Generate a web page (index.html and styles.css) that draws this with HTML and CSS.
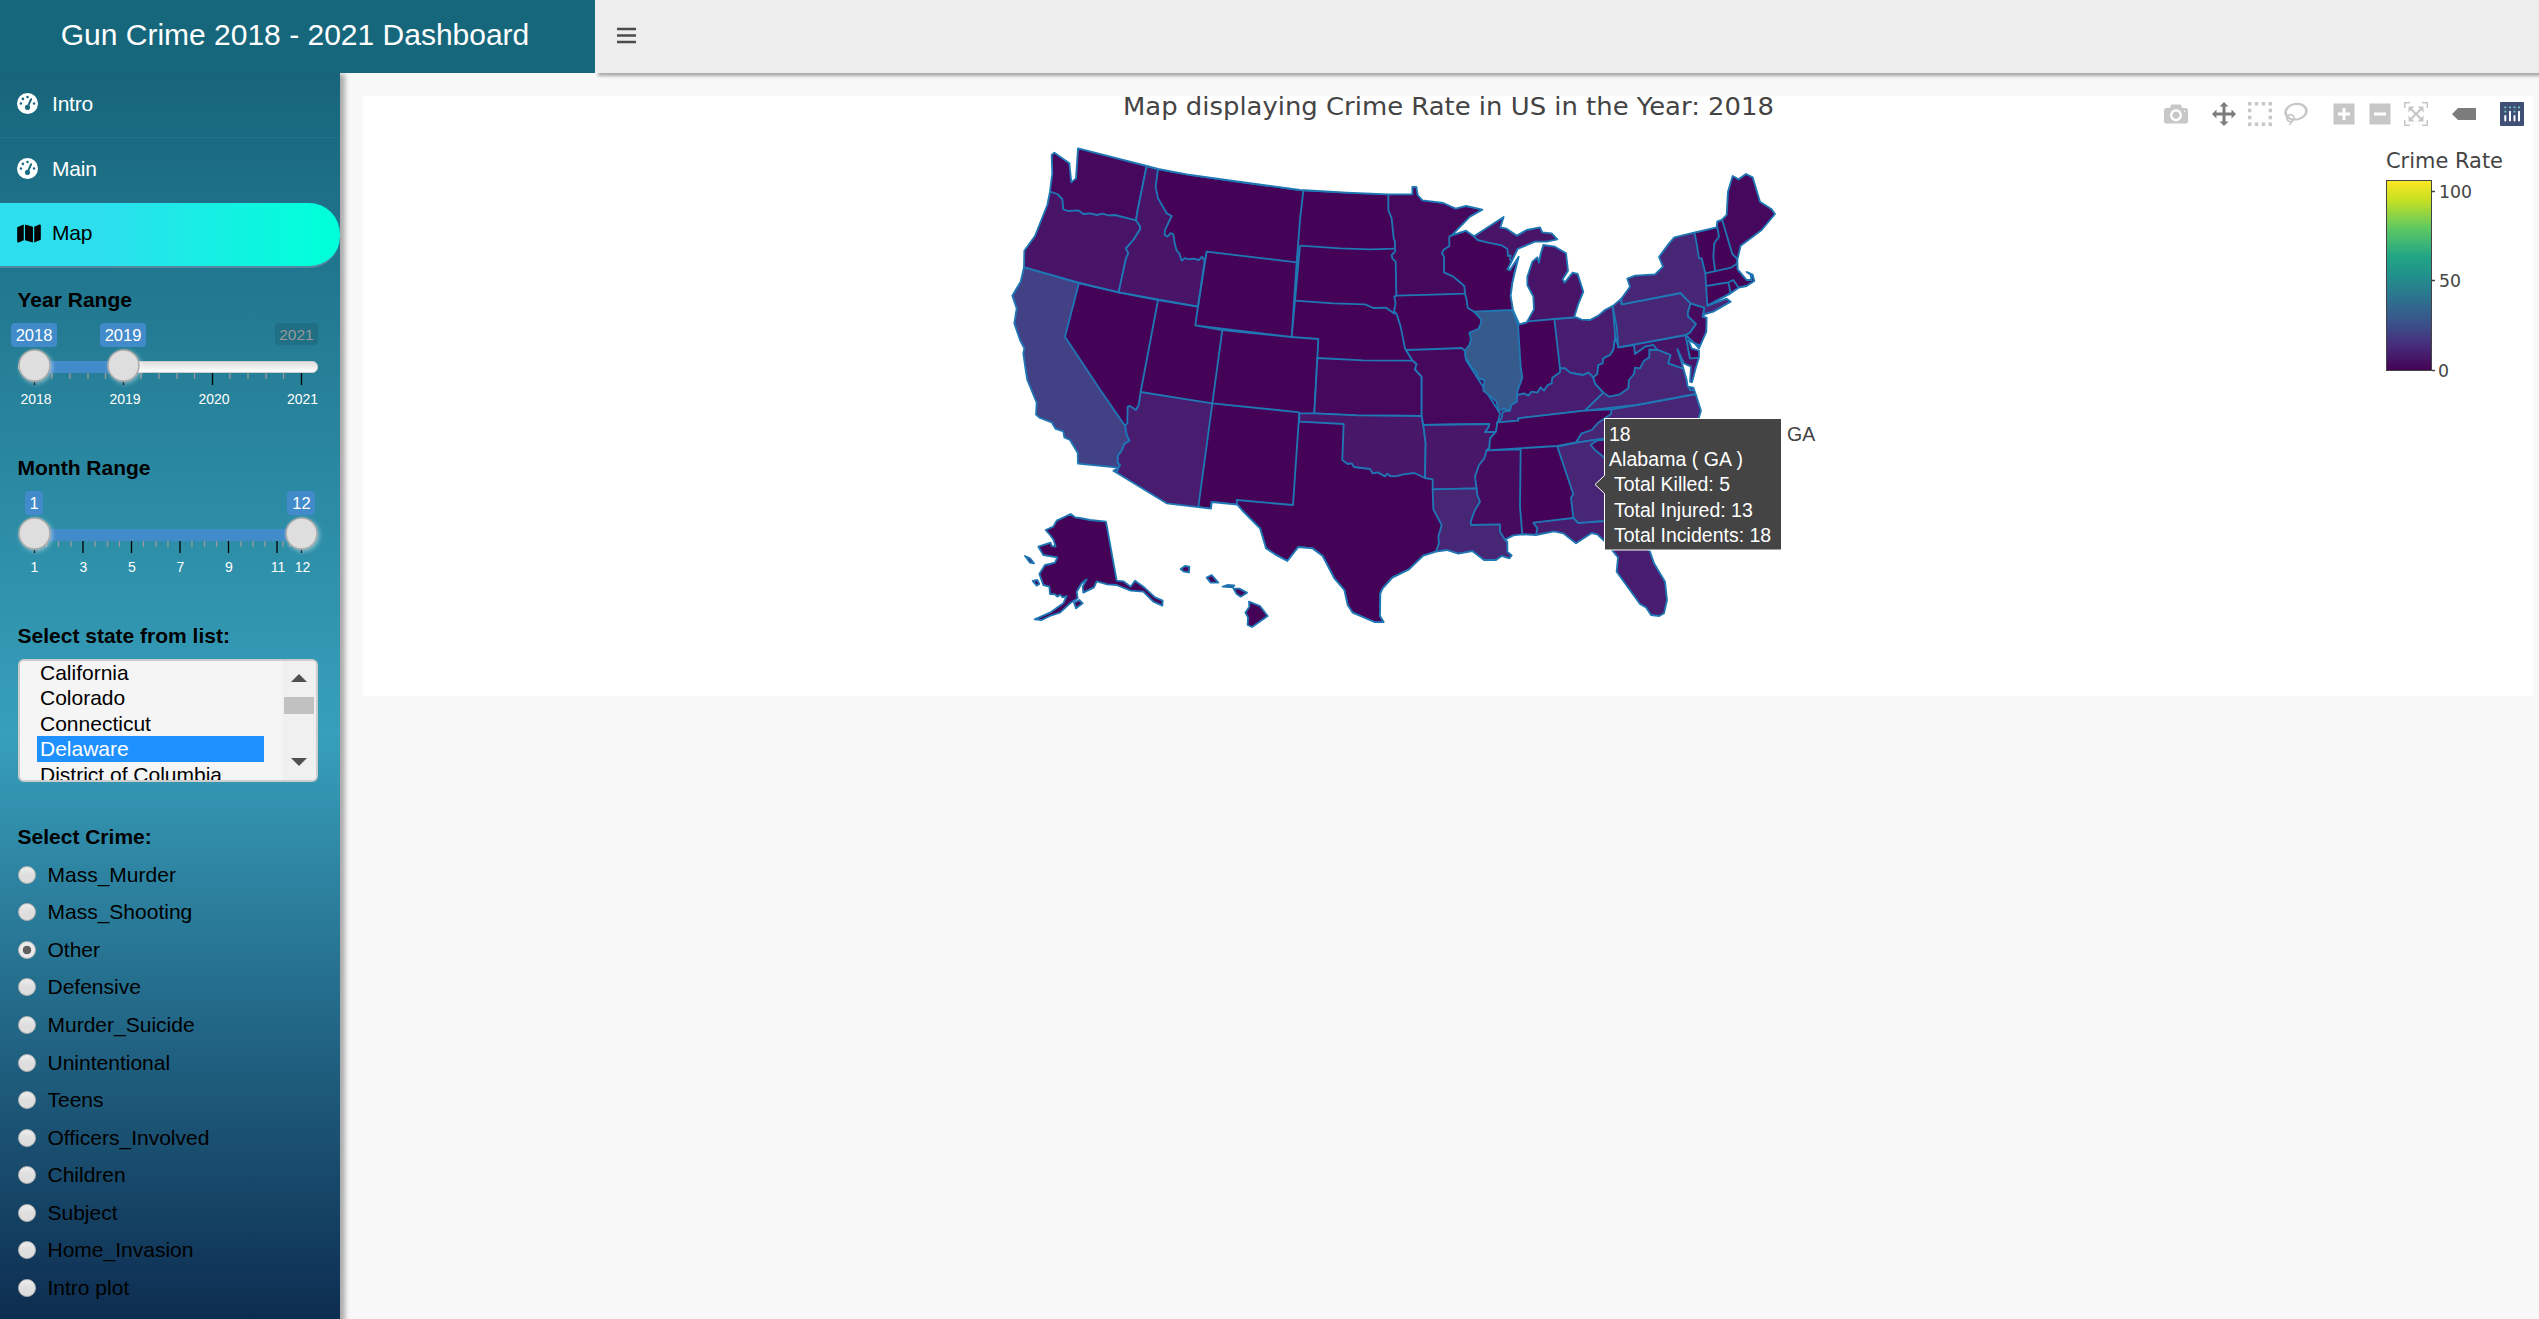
FILE: index.html
```html
<!DOCTYPE html>
<html lang="en">
<head>
<meta charset="utf-8">
<title>Gun Crime 2018 - 2021 Dashboard</title>
<link rel="stylesheet" href="styles.css">
</head>
<body>
<header class="header">
  <div class="logo">Gun Crime 2018 - 2021 Dashboard</div>
  <nav class="navbar">
    <svg class="burger" viewBox="0 0 20 17"><path d="M0 2H19M0 8.5H19M0 15H19"/></svg>
  </nav>
</header>
<div class="body">
<aside class="sidebar">
  <ul class="menu">
    <li class="item"><svg class="fa" viewBox="0 0 512 512"><path d="M0 256a256 256 0 1 1 512 0A256 256 0 1 1 0 256zM288 96a32 32 0 1 0 -64 0 32 32 0 1 0 64 0zM256 416c35.3 0 64-28.7 64-64c0-17.4-6.9-33.1-18.1-44.6L366 161.7c5.3-12.1-.2-26.3-12.3-31.6s-26.3 .2-31.6 12.3L257.9 288c-.6 0-1.3 0-1.9 0c-35.3 0-64 28.7-64 64s28.7 64 64 64zM176 144a32 32 0 1 0 -64 0 32 32 0 1 0 64 0zM96 288a32 32 0 1 0 0-64 32 32 0 1 0 0 64zm352-32a32 32 0 1 0 -64 0 32 32 0 1 0 64 0z"/></svg><span>Intro</span></li>
    <li class="item"><svg class="fa" viewBox="0 0 512 512"><path d="M0 256a256 256 0 1 1 512 0A256 256 0 1 1 0 256zM288 96a32 32 0 1 0 -64 0 32 32 0 1 0 64 0zM256 416c35.3 0 64-28.7 64-64c0-17.4-6.9-33.1-18.1-44.6L366 161.7c5.3-12.1-.2-26.3-12.3-31.6s-26.3 .2-31.6 12.3L257.9 288c-.6 0-1.3 0-1.9 0c-35.3 0-64 28.7-64 64s28.7 64 64 64zM176 144a32 32 0 1 0 -64 0 32 32 0 1 0 64 0zM96 288a32 32 0 1 0 0-64 32 32 0 1 0 0 64zm352-32a32 32 0 1 0 -64 0 32 32 0 1 0 64 0z"/></svg><span>Main</span></li>
    <li class="item active"><svg class="fa wide" viewBox="0 0 576 512"><path d="M384 476.1L192 421.2V35.9L384 90.8V476.1zm32-1.2V88.4L543.1 37.5c15.8-6.3 32.9 5.3 32.9 22.3V394.6c0 9.8-6 18.6-15.1 22.3L416 474.8v.1zM15.1 95.1L160 37.2V423.6L32.9 474.5C17.1 480.8 0 469.2 0 452.2V117.4c0-9.8 6-18.6 15.1-22.3z"/></svg><span>Map</span></li>
  </ul>

  <div class="field slider-field">
    <label class="label">Year Range</label>
    <svg class="slider" viewBox="0 0 340 90" width="340" height="90">
      <defs>
        <linearGradient id="track" x2="0" y2="1"><stop offset="0" stop-color="#ddd"/><stop offset=".5" stop-color="#eee"/><stop offset="1" stop-color="#fff"/></linearGradient>
        <filter id="glow" x="-40%" y="-40%" width="180%" height="180%"><feDropShadow dx="1.5" dy="1.5" stdDeviation="2" flood-color="#fff" flood-opacity=".45"/></filter>
      </defs>
      <path class="tick minor" d="M52 52v6M70 52v6M88 52v6M105.500 52v6M141 52v6M159 52v6M177 52v6M194.500 52v6M230 52v6M248 52v6M266 52v6M283.500 52v6"/>
      <path class="tick" d="M34.500 52v12M123.500 52v12M212.500 52v12M301.500 52v12"/>
      <rect x="18.500" y="40.500" width="299" height="11" rx="5" fill="url(#track)" stroke="#ccc"/>
      <rect x="34" y="40" width="89" height="12" class="bar"/>
      <rect x="11" y="2" width="46" height="24" rx="4" class="bar"/><text x="34" y="20" class="val">2018</text>
      <rect x="100" y="2" width="46" height="24" rx="4" class="bar"/><text x="123" y="20" class="val">2019</text>
      <rect x="275" y="2" width="43" height="22" rx="4" fill="#000" fill-opacity=".1"/><text x="296.500" y="19" class="val dim">2021</text>
      <circle cx="34.500" cy="44.500" r="15.500" class="knob"/><circle cx="123.500" cy="44.500" r="15.500" class="knob"/>
      <text x="36" y="83" class="num">2018</text><text x="125" y="83" class="num">2019</text><text x="214" y="83" class="num">2020</text><text x="302.500" y="83" class="num">2021</text>
    </svg>
  </div>

  <div class="field slider-field">
    <label class="label">Month Range</label>
    <svg class="slider" viewBox="0 0 340 90" width="340" height="90">
      <path class="tick minor" d="M46.500 52v6M58.500 52v6M71 52v6M95 52v6M107.500 52v6M119.500 52v6M143.500 52v6M156 52v6M168 52v6M192 52v6M204.500 52v6M216.500 52v6M241 52v6M253 52v6M265 52v6M283 52v6M290 52v6"/>
      <path class="tick" d="M34.500 52v12M83 52v12M131.500 52v12M180 52v12M228.500 52v12M277 52v12M301.500 52v12"/>
      <rect x="34" y="40" width="267" height="12" class="bar"/>
      <rect x="25" y="2" width="18" height="24" rx="4" class="bar"/><text x="34" y="20" class="val">1</text>
      <rect x="287" y="2" width="28" height="24" rx="4" class="bar"/><text x="301.500" y="20" class="val">12</text>
      <circle cx="34.500" cy="44.500" r="15.500" class="knob"/><circle cx="301.500" cy="44.500" r="15.500" class="knob"/>
      <text x="34.500" y="83" class="num">1</text><text x="83.500" y="83" class="num">3</text><text x="132" y="83" class="num">5</text><text x="180.500" y="83" class="num">7</text><text x="229" y="83" class="num">9</text><text x="278" y="83" class="num">11</text><text x="302.500" y="83" class="num">12</text>
    </svg>
  </div>

  <div class="field list-field">
    <label class="label">Select state from list:</label>
    <div class="listbox">
      <ul class="options"><li>California</li><li>Colorado</li><li>Connecticut</li><li class="sel">Delaware</li><li>District of Columbia</li></ul>
      <div class="scroll"><i class="up"></i><i class="thumb"></i><i class="down"></i></div>
    </div>
  </div>

  <div class="field">
    <label class="label">Select Crime:</label>
    <ul class="radios">
      <li><i></i>Mass_Murder</li><li><i></i>Mass_Shooting</li><li><i class="on"></i>Other</li><li><i></i>Defensive</li><li><i></i>Murder_Suicide</li><li><i></i>Unintentional</li><li><i></i>Teens</li><li><i></i>Officers_Involved</li><li><i></i>Children</li><li><i></i>Subject</li><li><i></i>Home_Invasion</li><li><i></i>Intro plot</li>
    </ul>
  </div>
</aside>

<main class="content">
<section class="card">
<svg class="plot" viewBox="363 96 2170 600" width="2170" height="600">
  <defs>
    <path id="land" d="M155 75L163 68 208 100 214 157 228 145 234 55 440 108 474 117 560 133 700 153 900 180 1040 188 1165 193 1237 193 1237 171 1249 171 1253 195 1267 211 1330 219 1367 236 1398 228 1447 239 1410 260 1355 316 1398 302 1422 319 1511 261 1501 292 1520 296 1551 317 1580 300 1620 292 1627 307 1655 310 1672 328 1640 335 1605 335 1560 354 1553 357 1537 390 1523 418 1530 420 1556 380 1544 428 1537 460 1532 497 1539 540 1558 583 1580 577 1602 538 1600 500 1582 465 1582 440 1597 395 1612 382 1617 398 1622 372 1630 345 1665 350 1698 370 1704 422 1688 448 1694 458 1718 428 1733 432 1750 485 1735 522 1723 560 1745 569 1770 570 1795 557 1815 540 1840 527 1864 506 1890 470 1882 446 1905 437 1965 433 1989 410 1977 381 2005 343 2023 322 2082 308 2150 292 2152 274 2165 270 2180 255 2184 185 2198 138 2216 148 2238 132 2258 142 2280 215 2315 238 2325 252 2285 300 2222 347 2212 390 2213 418 2240 450 2254 450 2252 434 2240 426 2258 434 2263 453 2240 468 2216 473 2192 490 2150 512 2122 528 2180 506 2192 515 2140 545 2115 552 2108 560 2120 563 2119 605 2097 655 2084 640 2065 630 2075 655 2097 662 2097 682 2087 715 2076 757 2070 755 2073 710 2052 700 2032 657 2042 688 2050 715 2060 750 2063 770 2080 773 2087 792 2103 842 2097 862 2050 950 1950 1080 1900 1180 1950 1265 1962 1300 1995 1355 2001 1410 1992 1450 1978 1458 1953 1455 1938 1432 1920 1422 1850 1325 1854 1282 1840 1265 1810 1230 1792 1213 1775 1209 1728 1240 1690 1210 1662 1204 1608 1215 1565 1213 1540 1216 1515 1229 1522 1235 1522 1265 1535 1276 1528 1285 1505 1278 1488 1290 1452 1290 1417 1263 1375 1271 1340 1260 1308 1265 1270 1277 1227 1318 1177 1343 1148 1375 1141 1390 1140 1458 1151 1476 1123 1476 1058 1448 1043 1425 1033 1380 1003 1345 968 1278 937 1255 895 1251 862 1293 825 1273 798 1255 780 1195 730 1145 712 1124 635 1116 633 1136 500 1120 340 1022 355 1013 234 1001 233 968 210 930 193 922 190 904 167 897 155 877 120 864 108 854 110 818 82 750 77 720 70 670 73 655 60 630 43 580 50 535 37 497 62 455 72 412 73 362 105 318 142 225 150 185 157 130Z"/>
    <clipPath id="coast"><use href="#land"/></clipPath>
    <linearGradient id="viridis" x2="0" y2="1"><stop offset="0" stop-color="#fde725"/><stop offset=".1" stop-color="#c8e020"/><stop offset=".25" stop-color="#5ec962"/><stop offset=".4" stop-color="#21a585"/><stop offset=".5" stop-color="#21918c"/><stop offset=".62" stop-color="#2c728e"/><stop offset=".75" stop-color="#3b528b"/><stop offset=".87" stop-color="#472c7a"/><stop offset="1" stop-color="#440154"/></linearGradient>
  </defs>

  <g class="map" transform="translate(1000 130) scale(.33333)">
    <g clip-path="url(#coast)">
      <use href="#land" class="c0"/>
      <!-- Pacific and mountain states -->
      <path class="c3" d="M73 412L237 459 356 487 378 385 385 370 378 355 400 330 421 297 420 288 408 271 400 200 130 160 0 400Z"/>
      <path class="c1" d="M150 185L172 192 187 207 190 238 205 243 235 241 250 252 272 250 290 255 308 251 325 256 345 255 408 271 412 245 440 108 440 30 130 30Z"/>
      <path class="c3" d="M440 108L474 117 467 170 474 205 500 250 515 258 500 290 495 300 494 315 503 320 512 309 520 313 524 340 530 362 538 370 545 392 555 384 566 388 580 386 597 390 606 380 614 392 594 530 356 487 378 385 385 370 378 355 400 330 421 297 420 288 408 271 412 245Z"/>
      <path class="c5" d="M422 786L637 820 595 1131 595 1150 490 1150 320 1030 355 1013 360 1005 353 1000 353 978 366 960 372 942 388 932 380 915 375 887 382 880 383 830 390 828 408 840 416 825Z"/>
      <path class="c7" d="M72 412L237 459 195 620 301 780 375 887 380 915 388 932 372 942 366 960 353 978 353 1000 360 1005 355 1013 350 1030 200 1030 0 850 0 400Z"/>
      <path class="b" d="M237 459L356 487 474 510 422 786M474 510L594 530 586 586 667 600 637 820M614 392L620 365 890 397 875 621 586 586M594 530L620 365M910 182L900 270 890 397M900 347L885 512 875 621 M667 600L875 621 955 627 943 850M637 820L898 847 879 1125 710 1110 712 1130"/>
      <!-- Plains -->
      <path class="c1" d="M1165 180L1165 240 1175 265 1181 325 1185 335 1185 365 1175 375 1177 385 1187 395 1189 497 1300 494 1395 491 1393 468 1360 440 1332 427 1332 380 1326 370 1330 360 1348 348 1348 320 1355 316 1480 240 1250 150Z"/>
      <path class="b" d="M900 347L1020 355 1110 358 1185 356M885 512L1000 520 1095 523 1120 534 1158 533 1185 552M1189 497L1183 500 1187 520 1182 543 1190 552 1202 590 1208 620 1215 655 1238 692 1250 702"/>
      <path class="c1" d="M952 684L1090 691 1238 692 1250 702 1245 718 1265 740 1265 858 1070 856 943 850Z"/>
      <path class="c4" d="M898 850L943 850 1070 856 1265 858 1270 885 1277 940 1275 1044 1243 1029 1210 1033 1187 1039 1170 1038 1162 1031 1155 1039 1133 1027 1118 1030 1110 1017 1062 1011 1055 1000 1043 1002 1027 990 1031 882 898 875Z"/>
      <path class="c1" d="M1218 660L1310 657 1385 654 1395 662 1398 690 1500 850 1488 906 1455 906 1465 892 1468 882 1270 885 1265 858 1265 740 1245 718 1250 702 1238 692Z"/>
      <path class="b" d="M1395 491L1400 510 1403 533 1422 545"/>
      <path class="c2" d="M1460 961L1562 958 1560 1130 1567 1213 1567 1250 1450 1250 1380 1150 1420 1000Z"/>
      <path class="c4" d="M1270 885L1468 882 1465 892 1455 906 1488 906 1470 925 1468 955 1460 961 1453 985 1437 1005 1425 1040 1428 1065 1430 1075 1298 1078 1298 1048 1275 1044 1277 940Z"/>
      <path class="c6" d="M1298 1078L1430 1075 1432 1095 1440 1115 1425 1140 1412 1175 1413 1185 1500 1183 1500 1205 1515 1229 1570 1300 1400 1330 1300 1300 1308 1265 1317 1240 1315 1220 1325 1185 1300 1138Z"/>
      <!-- Great Lakes -->
      <path class="c3" d="M1422 319L1432 330 1465 338 1505 346 1522 357 1524 378 1532 376 1530 388 1537 395 1553 357 1605 337 1640 337 1700 330 1640 250 1500 240Z"/>
      <path class="c5" d="M1663 567L1680 715 1695 715 1710 728 1730 732 1750 735 1765 728 1780 742 1792 732 1795 705 1808 700 1810 685 1830 675 1840 660 1846 620 1838 527 1820 500 1723 562Z"/>
      <path class="c3" d="M1570 576L1585 574 1663 567 1723 562 1790 500 1720 339 1626 339 1566 400Z"/>
      <path class="c5" d="M1492 877L1505 865 1508 845 1530 842 1533 825 1550 815 1552 795 1572 790 1585 797 1595 785 1612 788 1622 772 1632 782 1643 765 1655 760 1657 743 1680 727 1680 715 1695 715 1710 728 1730 732 1750 735 1765 728 1780 742 1785 760 1810 788 1755 842 1555 865 1555 872Z"/>
      <path class="c8" d="M1422 545L1537 540 1554 583 1562 710 1567 743 1552 785 1550 815 1533 825 1530 842 1510 837 1495 843 1490 815 1468 797 1450 782 1453 750 1435 745 1430 728 1415 712 1396 680 1396 660 1408 645 1413 628 1408 608 1435 597 1443 580 1443 568Z"/>
      <path class="b" d="M1554 583L1585 574"/>
      <!-- South -->
      <path class="c5" d="M1600 1178L1720 1164 1733 1178 1812 1173 2050 1173 2050 1500 1800 1500 1780 1280 1608 1280 1608 1215 1612 1195Z"/>
      <path class="c6" d="M1755 842L1835 838 1910 825 2087 792 2140 860 1900 1000 1815 925 1730 938Z"/>
      <path class="c6" d="M1672 950L1730 938 1815 925 1900 1150 1812 1173 1735 1179 1720 1162 1713 1103 1720 1093Z"/>
      <path class="c1" d="M1790 932L1772 945 1785 960 1810 980 1900 1100 1900 920Z"/>
      <path class="c0" d="M1492 877L1555 872 1555 865 1755 842 1835 838 1833 852 1795 878 1775 900 1745 910 1728 937 1672 948 1460 961 1468 955 1470 925 1488 905Z"/>
      <!-- Mid-Atlantic -->
      <path class="c6" d="M1755 842L1910 825 2087 792 2100 750 2050 715 2005 700 2012 675 1972 650 1850 700 1810 788Z"/>
      <path class="c3" d="M1855 652L2057 615 2070 685 2110 682 2110 760 2080 780 2069 780 2062 720 2050 716 2005 700 2012 675 2000 670 1975 660 1950 660 1905 690Z"/>
      <path class="c0" d="M1780 742L1792 732 1795 705 1808 700 1810 685 1830 675 1840 660 1846 620 1855 652 1902 645 1905 672 1935 650 1960 645 1972 660 1948 658 1948 682 1932 692 1920 715 1905 713 1902 732 1887 750 1885 775 1860 793 1828 800 1810 788 1785 760Z"/>
      <path class="c0" d="M2057 615L2070 608 2085 640 2110 650 2110 682 2070 685Z"/>
      <path class="c6" d="M1838 527L1850 590 1855 652 2057 615 2070 608 2088 582 2065 560 2063 550 2072 520 2057 505 2042 489 1865 523 1860 490Z"/>
      <path class="c2" d="M2072 520L2113 533 2108 560 2140 570 2140 660 2084 640 2057 615 2070 608 2088 582 2065 560 2063 550Z"/>
      <path class="c6" d="M1864 500L1865 523 2042 489 2057 505 2072 520 2113 533 2110 560 2220 530 2200 500 2122 525 2116 430 2105 385 2097 385 2090 340 2082 300 1960 300 1860 420Z"/>
      <!-- New England -->
      <path class="c1" d="M2165 265L2197 372 2212 387 2350 300 2300 100 2170 100Z"/>
      <path class="b" d="M2152 292L2157 320 2143 340 2140 380 2145 422M2116 430L2193 413 2212 400M2118 468L2185 457 2200 450 2216 473M2185 457L2192 490"/>
    </g>
    <use href="#land" class="b"/>
    <!-- Alaska and Hawaii -->
    <path class="c0" d="M212 1152L225 1162 240 1164 270 1170 318 1175 350 1352 370 1354 392 1370 405 1352 430 1370 465 1402 488 1412 487 1427 460 1415 430 1385 392 1382 350 1365 322 1363 290 1354 282 1372 250 1388 248 1370 260 1348 245 1360 230 1385 233 1405 210 1420 180 1448 150 1458 125 1470 104 1468 150 1448 190 1420 200 1398 188 1402 180 1394 172 1400 165 1393 150 1392 148 1370 130 1365 118 1332 135 1305 150 1302 165 1298 172 1282 130 1275 115 1250 152 1238 155 1248 167 1250 160 1228 150 1215 137 1200 160 1190 170 1172 185 1165Z"/>
    <path class="c0" d="M75 1278L90 1285 102 1300 90 1298ZM98 1353L112 1350 118 1362 110 1367ZM222 1418L238 1410 248 1420 228 1435ZM542 1317L555 1308 568 1310 567 1327 552 1325ZM620 1343L635 1335 655 1358 632 1358ZM668 1370L682 1365 703 1366 698 1372ZM700 1375L718 1376 741 1388 722 1400 710 1392ZM747 1415L780 1428 803 1458 756 1491 743 1485 744 1462 736 1448 748 1430Z"/>
  </g>

  <text x="1123" y="115" class="title" textLength="651" lengthAdjust="spacingAndGlyphs">Map displaying Crime Rate in US in the Year: 2018</text>

  <!-- Colour scale -->
  <text x="2386" y="168" class="ctitle" textLength="117" lengthAdjust="spacingAndGlyphs">Crime Rate</text>
  <rect x="2386.500" y="180.500" width="45" height="190" fill="url(#viridis)" stroke="#444"/>
  <path d="M2432 191.500h3M2432 280.500h3M2432 370.500h3" stroke="#444" stroke-width="1.500"/>
  <text x="2439" y="197.500" class="ctick" textLength="33" lengthAdjust="spacingAndGlyphs">100</text>
  <text x="2439" y="287" class="ctick" textLength="22" lengthAdjust="spacingAndGlyphs">50</text>
  <text x="2438" y="376.500" class="ctick" textLength="11" lengthAdjust="spacingAndGlyphs">0</text>

  <!-- Hover label -->
  <path d="M1604.500 418.500H1781.500V550H1604.500V493.500L1595 484.500 1604.500 475.500Z" fill="#444" stroke="#fff"/>
  <g class="hover"><text x="1609" y="441">18</text><text x="1609" y="466" textLength="134">Alabama ( GA )</text><text x="1614" y="491">Total Killed: 5</text><text x="1614" y="517">Total Injured: 13</text><text x="1614" y="542">Total Incidents: 18</text></g>
  <text x="1787" y="441" class="abbr">GA</text>
</svg>
<div class="modebar">
  <div class="group"><svg viewBox="0 0 1000 1000"><path transform="matrix(1 0 0 -1 0 850)" d="m500 450c-83 0-150-67-150-150 0-83 67-150 150-150 83 0 150 67 150 150 0 83-67 150-150 150z m400 150h-120c-16 0-34 13-39 29l-31 93c-6 15-23 28-40 28h-340c-16 0-34-13-39-28l-31-94c-6-15-23-28-40-28h-120c-55 0-100-45-100-100v-450c0-55 45-100 100-100h800c55 0 100 45 100 100v450c0 55-45 100-100 100z m-400-550c-138 0-250 112-250 250 0 138 112 250 250 250 138 0 250-112 250-250 0-138-112-250-250-250z m365 380c-19 0-35 16-35 35 0 19 16 35 35 35 19 0 35-16 35-35 0-19-16-35-35-35z"/></svg></div>
  <div class="group">
    <svg class="on" viewBox="0 0 1000 1000"><path transform="matrix(1 0 0 -1 0 850)" d="m1000 350l-187 188 0-125-250 0 0 250 125 0-188 187-187-187 125 0 0-250-250 0 0 125-188-188 186-187 0 125 252 0 0-250-125 0 187-188 188 188-125 0 0 250 250 0 0-126 187 188z"/></svg>
    <svg viewBox="0 0 1000 1000"><path transform="matrix(1 0 0 -1 0 850)" d="m0 850l0-143 143 0 0 143-143 0z m286 0l0-143 143 0 0 143-143 0z m285 0l0-143 143 0 0 143-143 0z m286 0l0-143 143 0 0 143-143 0z m-857-286l0-143 143 0 0 143-143 0z m857 0l0-143 143 0 0 143-143 0z m-857-285l0-143 143 0 0 143-143 0z m857 0l0-143 143 0 0 143-143 0z m-857-286l0-143 143 0 0 143-143 0z m286 0l0-143 143 0 0 143-143 0z m285 0l0-143 143 0 0 143-143 0z m286 0l0-143 143 0 0 143-143 0z"/></svg>
    <svg viewBox="0 0 1031 1000"><path transform="matrix(1 0 0 -1 0 850)" d="m1018 538c-36 207-290 336-568 286-277-48-473-256-436-463 10-57 36-108 76-151-13-66 11-137 68-183 34-28 75-41 114-42l-55-70 0 0c-2-1-3-2-4-3-10-14-8-34 5-45 14-11 34-8 45 4 1 1 2 3 2 5l0 0 113 140c16 11 31 24 45 40 4 3 6 7 8 11 48-3 100 0 151 9 278 48 473 255 436 462z m-624-379c-80 14-149 48-197 96 42 42 109 47 156 9 33-26 47-66 41-105z m-187-74c-19 16-33 37-39 60 50-32 109-55 174-68-42-25-95-24-135 8z m360 75c-34-7-69-9-102-8 8 62-16 128-68 170-73 59-175 54-244-5-9 20-16 40-20 61-28 159 121 317 333 354s407-60 434-217c28-159-121-318-333-355z"/></svg>
  </div>
  <div class="group">
    <svg viewBox="-62 0 1000 1000"><path transform="matrix(1 0 0 -1 0 850)" d="m1 787l0-875 875 0 0 875-875 0z m687-500l-187 0 0-187-125 0 0 187-188 0 0 125 188 0 0 187 125 0 0-187 187 0 0-125z"/></svg>
    <svg viewBox="-62 0 1000 1000"><path transform="matrix(1 0 0 -1 0 850)" d="m0 788l0-876 875 0 0 876-875 0z m688-500l-500 0 0 125 500 0 0-125z"/></svg>
    <svg viewBox="0 0 1000 1000"><path transform="matrix(1 0 0 -1 0 850)" d="m250 850l-187 0-63 0 0-62 0-188 63 0 0 188 187 0 0 62z m688 0l-188 0 0-62 188 0 0-188 62 0 0 188 0 62-62 0z m-875-938l0 188-63 0 0-188 0-62 63 0 187 0 0 62-187 0z m875 188l0-188-188 0 0-62 188 0 62 0 0 62 0 188-62 0z m-125 188l-1 0-93-94-156 156 156 156 92-93 2 0 0 250-250 0 0-2 93-92-156-156-156 156 94 92 0 2-250 0 0-250 0 0 93 93 157-156-157-156-93 94 0 0 0-250 250 0 0 0-94 93 156 157 156-157-93-93 0 0 250 0 0 250z"/></svg>
  </div>
  <div class="group"><svg class="on" viewBox="0 0 1500 1000"><path transform="matrix(1 0 0 -1 0 850)" d="m375 725l0 0-375-375 375-374 0-1 1125 0 0 750-1125 0z"/></svg></div>
  <div class="group"><svg viewBox="0 0 24 24"><rect width="24" height="24" rx="1" class="brand"/><path d="M5.300 14v4.500M10 9.800v8.700M14.500 14v4.500M19 9.800v8.700" stroke="#fff" stroke-width="2" stroke-linecap="round"/><path d="M4.300 5.300h2M9 5.300h2M13.500 5.300h2M18 5.300h2M4.300 9.700h2M13.500 9.700h2" stroke="#6fc5c0" stroke-width="1.800"/></svg></div>
</div>
</section>
</main>
</div>
</body>
</html>
```
FILE: styles.css
```css
* { box-sizing: border-box; }
body { margin: 0; height: 1319px; display: flex; flex-direction: column; overflow: hidden; background: #f8f8f8; font: 21px/30px "Liberation Sans", Arial, sans-serif; color: #000; }
ul { list-style: none; margin: 0; padding: 0; }

.header { display: flex; height: 73px; flex: none; position: relative; z-index: 1; }
.logo { width: 595px; flex: none; padding-right: 5px; background: #17677c; color: #fff; font-size: 30px; line-height: 70px; text-align: center; }
.navbar { flex: 1; background: #ededed; box-shadow: 3px 3px 3px #aaa; display: flex; align-items: center; padding: 0 0 3px 22px; }
.burger { width: 20px; height: 17px; stroke: #4b4b4b; stroke-width: 2.6; }

.body { flex: 1; display: flex; min-height: 0; }
.sidebar { width: 340px; flex: none; background: linear-gradient(#17657b, #379fbb 662px, #0d2d50); box-shadow: 3px 3px 5px 2px #aaa; }
.item { height: 65px; display: flex; align-items: center; gap: 14px; padding: 0 0 3px 17px; border-bottom: 1px solid #22708a; color: #fff; letter-spacing: -.2px; }
.item.active { color: #000; gap: 11px; background: linear-gradient(90deg, #2ddfee 30%, #00ffd9 95%); border-radius: 0 31px 31px 0; border-bottom: 2px solid #5487a0; }
.fa { width: 21px; height: 21px; fill: currentColor; }
.fa.wide { width: 24px; }

.label { display: block; font-weight: bold; padding-left: 17.5px; height: 30px; margin-top: -1px; }
.field { padding-top: 18px; }
.slider-field { height: 168px; }
.slider { display: block; margin-top: 6px; }
.bar { fill: #428bca; }
.knob { fill: #dedede; stroke: #aaa; stroke-width: 1.5; filter: url(#glow); }
.tick { stroke: #000; stroke-width: 1.3; }
.tick.minor { stroke: #999; }
.val { fill: #fff; font-size: 16.5px; text-anchor: middle; }
.val.dim { fill: #999; font-size: 15.5px; }
.num { fill: #fff; font-size: 14px; text-anchor: middle; }

.list-field { height: 201px; }
.listbox { margin: 8px 22px 0 18px; height: 123px; border: 2px solid #ccc; border-radius: 6px; background: #f5f5f5; overflow: hidden; display: flex; justify-content: space-between; }
.options { width: 227px; margin: -1px 0 0 17px; line-height: 25.400px; }
.options li { padding-left: 3px; white-space: nowrap; }
.options .sel { background: #1e90ff; color: #fff; }
.scroll { width: 34px; background: #f0f0f0; display: flex; flex-direction: column; align-items: center; }
.up, .down { border: 8px solid transparent; border-top: 0; border-bottom-color: #505050; margin-top: 13px; }
.thumb { width: 30px; height: 17px; background: #c1c1c1; margin-top: 15px; }
.down { border: 8px solid transparent; border-bottom: 0; border-top-color: #505050; margin-top: 44px; }

.radios { padding-top: 4px; }
.radios li { height: 37.550px; display: flex; align-items: center; gap: 11.500px; padding-left: 18px; }
.radios i { width: 18px; height: 18px; border-radius: 50%; border: 1px solid #b5b5b5; background: linear-gradient(#eee, #dedede 50%); }
.radios .on { background: radial-gradient(circle, #606060 4px, #eaeaea 4.600px); }

.content { flex: 1; padding: 23px 6px 0 23px; }
.card { position: relative; width: 2170px; height: 600px; background: #fff; }
.plot { display: block; }
.map { stroke: #1f77b4; stroke-width: 5.5; stroke-linejoin: round; }
.b { fill: none; }
.c0 { fill: #440356; }
.c1 { fill: #46085c; }
.c2 { fill: #460b5e; }
.c3 { fill: #481467; }
.c4 { fill: #481769; }
.c5 { fill: #481c6e; }
.c6 { fill: #472676; }
.c7 { fill: #424186; }
.c8 { fill: #375a8c; }
.title, .ctitle, .ctick { font-family: "DejaVu Sans", Verdana, sans-serif; fill: #444; }
.title { font-size: 25.5px; }
.ctitle { font-size: 21px; }
.ctick { font-size: 17.500px; }
.hover text { fill: #fff; font-size: 19.500px; }
.abbr { fill: #444; font-size: 19.500px; }

.modebar { position: absolute; top: 6px; right: 9px; display: flex; gap: 24px; }
.group { display: flex; gap: 12px; }
.modebar svg { width: 24px; height: 24px; fill: #c7c7c7; }
.modebar .on { fill: #7c7c7c; }
.modebar .brand { fill: #3f4f75; }
```
